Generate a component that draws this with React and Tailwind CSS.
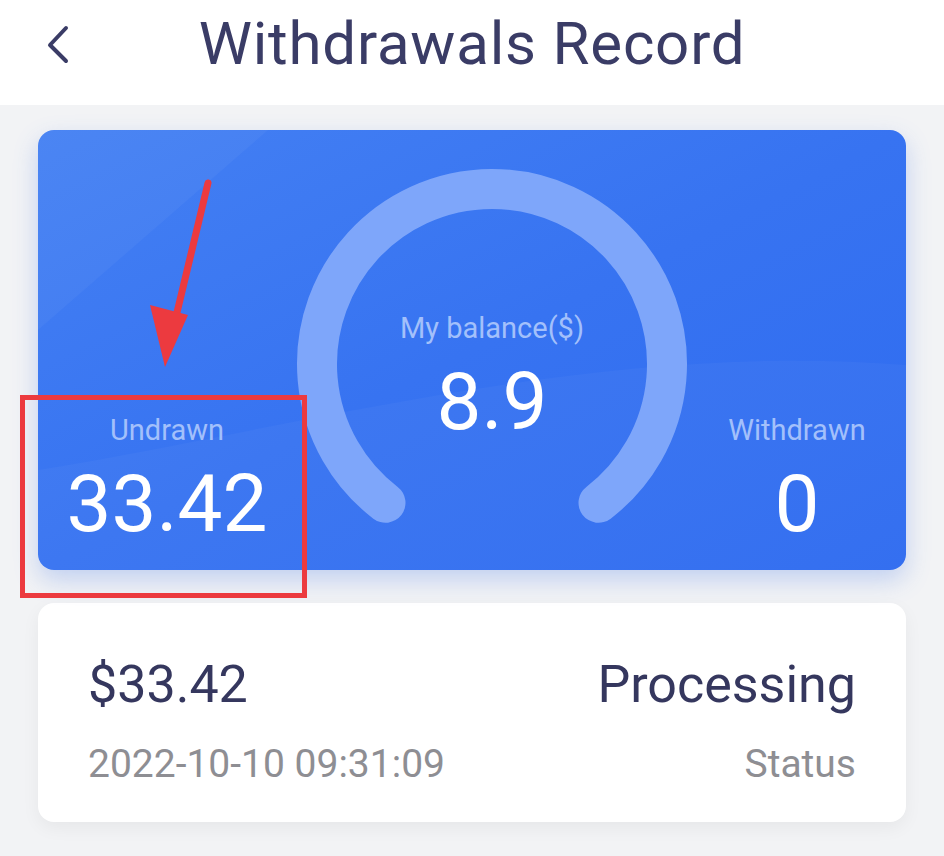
import React from 'react';

const Gauge = () => (
  <svg width="392" height="392" viewBox="0 0 392 392" className="absolute left-0 top-[38px]">
    <path
      d="M 89.5 334.8 A 175 175 0 1 1 302.5 334.8"
      fill="none"
      stroke="#7ea6fa"
      strokeWidth="40"
      strokeLinecap="round"
    />
  </svg>
);

const Stat = ({ label, value }) => (
  <div className="flex flex-col items-center">
    <div className="text-[29px] leading-none text-[#a3c0fb]">{label}</div>
    <div className="mt-[19px] text-[80px] leading-none text-white">{value}</div>
  </div>
);

const App = () => {
  return (
    <div className="min-h-[856px] bg-[#f2f3f5] font-['Roboto',sans-serif]">
      <header className="relative flex h-[105px] items-center justify-center bg-white">
        <svg width="26" height="40" viewBox="0 0 26 40" className="absolute left-[44px] top-[24px]">
          <path d="M22 4 L6 21 L22 37" fill="none" stroke="#3a3c66" strokeWidth="4" strokeLinecap="round" strokeLinejoin="round" />
        </svg>
        <h1 className="mb-[18px] text-[60px] leading-none tracking-[0.8px] text-[#3a3c66]">Withdrawals Record</h1>
      </header>

      <main className="relative px-[38px] pt-[25px]">
        <div className="relative flex h-[440px] overflow-hidden rounded-[16px] bg-gradient-to-br from-[#4480f3] via-[#3773f1] to-[#2e6bf0] shadow-[0_10px_24px_rgba(70,120,230,0.28)]">
          <svg className="absolute inset-0" width="868" height="440" viewBox="0 0 868 440">
            <path d="M 0 0 L 230 0 L 0 200 Z" fill="#ffffff" opacity="0.04" />
            <path d="M 0 440 L 0 340 C 250 300 560 210 868 235 L 868 440 Z" fill="#ffffff" opacity="0.03" />
          </svg>

          <div className="relative flex w-[258px] items-end justify-center pb-[26px]">
            <Stat label="Undrawn" value="33.42" />
          </div>

          <div className="relative w-[392px]">
            <Gauge />
            <div className="relative flex flex-col items-center pt-[184px]">
              <div className="text-[29px] leading-none text-[#a3c0fb]">My balance($)</div>
              <div className="mt-[19px] text-[80px] leading-none text-white">8.9</div>
            </div>
          </div>

          <div className="relative flex flex-1 items-end justify-center pb-[26px]">
            <Stat label="Withdrawn" value="0" />
          </div>
        </div>

        <div className="mt-[33px] flex h-[219px] items-center justify-between rounded-[16px] bg-white px-[50px] pt-[18px] shadow-[0_6px_18px_rgba(0,0,0,0.05)]">
          <div className="flex flex-col">
            <div className="text-[52px] leading-none text-[#35375e]">$33.42</div>
            <div className="mt-[34px] text-[39px] leading-none text-[#8e8e93]">2022-10-10 09:31:09</div>
          </div>
          <div className="flex flex-col items-end">
            <div className="text-[52px] leading-none text-[#35375e]">Processing</div>
            <div className="mt-[34px] text-[39px] leading-none text-[#8e8e93]">Status</div>
          </div>
        </div>

        <div className="absolute left-[20px] top-[290px] h-[203px] w-[287px] border-[5px] border-[#ec3a3f]" />
        <svg className="absolute left-[140px] top-[70px]" width="80" height="200" viewBox="0 0 80 200">
          <line x1="68" y1="8" x2="34" y2="150" stroke="#ec3a3f" strokeWidth="7" strokeLinecap="round" />
          <polygon points="10,130 48,140 25,192" fill="#ec3a3f" />
        </svg>
      </main>
    </div>
  );
};

export default App;
